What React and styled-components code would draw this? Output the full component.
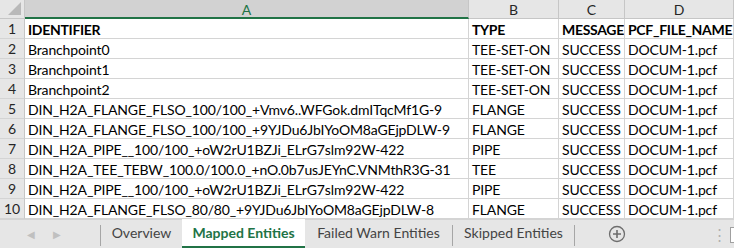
import React from 'react';
import styled, { createGlobalStyle } from 'styled-components';

const Global = createGlobalStyle`
  html, body { margin: 0; padding: 0; background: #fff; }
  body { font-family: Lato, "Open Sans", sans-serif; overflow: hidden; }
`;

const Sheet = styled.div`
  width: 734px;
  height: 248px;
  display: flex;
  flex-direction: column;
  background: #fff;
`;

const Grid = styled.div`
  display: grid;
  grid-template-columns: 25px 444px 90px 66px 109px;
  grid-template-rows: 19px repeat(10, 20px);
`;

const Corner = styled.div`
  position: relative;
  background: #e6e6e6;
  border-right: 1px solid #c6c6c6;
  border-bottom: 1px solid #c6c6c6;
  &::after {
    content: '';
    position: absolute;
    right: 3px;
    bottom: 3px;
    border-left: 13px solid transparent;
    border-bottom: 13px solid #b9b9b9;
  }
`;

const ColHead = styled.div`
  background: ${p => (p.$sel ? '#d2d2d2' : '#e6e6e6')};
  border-right: 1px solid #c6c6c6;
  border-bottom: ${p => (p.$sel ? '2px solid #217346' : '1px solid #c6c6c6')};
  color: ${p => (p.$sel ? '#217346' : '#262626')};
  font-size: 14px;
  display: flex;
  align-items: center;
  justify-content: center;
  padding-top: 1px;
  box-sizing: border-box;
`;

const RowHead = styled.div`
  background: #e6e6e6;
  border-right: 1px solid #c6c6c6;
  border-bottom: 1px solid #d4d4d4;
  color: #262626;
  font-size: 14px;
  display: flex;
  align-items: center;
  justify-content: center;
  box-sizing: border-box;
`;

const Cell = styled.div`
  border-right: 1px solid #d4d4d4;
  border-bottom: 1px solid #d4d4d4;
  color: #000;
  font-size: 14px;
  letter-spacing: ${p => (p.$bold ? '-0.3px' : '-0.15px')};
  font-weight: ${p => (p.$bold ? 700 : 400)};
  padding: 1px 0 0 3px;
  display: flex;
  align-items: center;
  white-space: nowrap;
  overflow: hidden;
  box-sizing: border-box;
`;

const TabBar = styled.div`
  flex: 1;
  display: flex;
  align-items: stretch;
  background: #e6e6e6;
  border-top: 1px solid #d4d4d4;
  font-size: 14px;
`;

const Nav = styled.div`
  width: 100px;
  display: flex;
  align-items: center;
  justify-content: center;
  gap: 18px;
  color: #c0c0c0;
  font-size: 10px;
  padding-right: 12px;
  box-sizing: border-box;
`;

const Sep = styled.div`
  width: 1px;
  background: #a6a6a6;
  margin: 5px 0 2px;
`;

const Tab = styled.div`
  width: ${p => p.$w}px;
  display: flex;
  align-items: center;
  justify-content: center;
  color: ${p => (p.$active ? '#217346' : '#444')};
  font-weight: ${p => (p.$active ? 700 : 400)};
  background: ${p => (p.$active ? '#fff' : 'transparent')};
  border-bottom: 2px solid ${p => (p.$active ? '#217346' : 'transparent')};
  margin-top: -1px;
  white-space: nowrap;
`;

const AddBtn = styled.div`
  width: 84px;
  display: flex;
  align-items: center;
  justify-content: center;
`;

const Dots = styled.div`
  margin-left: auto;
  width: 22px;
  display: flex;
  align-items: center;
  justify-content: center;
  color: #b0b0b0;
  font-size: 15px;
`;

const Edge = styled.div`
  width: 3px;
  margin: 7px 0 5px;
  border: 1px solid #a0a0a0;
  border-right: none;
  background: #fff;
`;

const rows = [
  ['IDENTIFIER', 'TYPE', 'MESSAGE', 'PCF_FILE_NAME'],
  ['Branchpoint0', 'TEE-SET-ON', 'SUCCESS', 'DOCUM-1.pcf'],
  ['Branchpoint1', 'TEE-SET-ON', 'SUCCESS', 'DOCUM-1.pcf'],
  ['Branchpoint2', 'TEE-SET-ON', 'SUCCESS', 'DOCUM-1.pcf'],
  ['DIN_H2A_FLANGE_FLSO_100/100_+Vmv6..WFGok.dmITqcMf1G-9', 'FLANGE', 'SUCCESS', 'DOCUM-1.pcf'],
  ['DIN_H2A_FLANGE_FLSO_100/100_+9YJDu6JbIYoOM8aGEjpDLW-9', 'FLANGE', 'SUCCESS', 'DOCUM-1.pcf'],
  ['DIN_H2A_PIPE__100/100_+oW2rU1BZJi_ELrG7slm92W-422', 'PIPE', 'SUCCESS', 'DOCUM-1.pcf'],
  ['DIN_H2A_TEE_TEBW_100.0/100.0_+nO.0b7usJEYnC.VNMthR3G-31', 'TEE', 'SUCCESS', 'DOCUM-1.pcf'],
  ['DIN_H2A_PIPE__100/100_+oW2rU1BZJi_ELrG7slm92W-422', 'PIPE', 'SUCCESS', 'DOCUM-1.pcf'],
  ['DIN_H2A_FLANGE_FLSO_80/80_+9YJDu6JbIYoOM8aGEjpDLW-8', 'FLANGE', 'SUCCESS', 'DOCUM-1.pcf'],
];

const PlusIcon = () => (
  <svg width="18" height="18" viewBox="0 0 18 18">
    <circle cx="9" cy="9" r="7.5" fill="none" stroke="#6d6d6d" strokeWidth="1.3" />
    <path d="M9 5v8M5 9h8" stroke="#6d6d6d" strokeWidth="1.6" />
  </svg>
);

export default function App() {
  return (
    <Sheet>
      <Global />
      <Grid>
        <Corner />
        <ColHead $sel>A</ColHead>
        <ColHead>B</ColHead>
        <ColHead>C</ColHead>
        <ColHead>D</ColHead>
        {rows.map((r, i) => (
          <React.Fragment key={i}>
            <RowHead>{i + 1}</RowHead>
            {r.map((v, j) => (
              <Cell key={j} $bold={i === 0}>{v}</Cell>
            ))}
          </React.Fragment>
        ))}
      </Grid>
      <TabBar>
        <Nav><span>◀</span><span>▶</span></Nav>
        <Sep />
        <Tab $w={81}>Overview</Tab>
        <Tab $w={123} $active>Mapped Entities</Tab>
        <Tab $w={147}>Failed Warn Entities</Tab>
        <Sep />
        <Tab $w={121}>Skipped Entities</Tab>
        <Sep />
        <AddBtn><PlusIcon /></AddBtn>
        <Dots>⋮</Dots>
        <Edge />
      </TabBar>
    </Sheet>
  );
}
